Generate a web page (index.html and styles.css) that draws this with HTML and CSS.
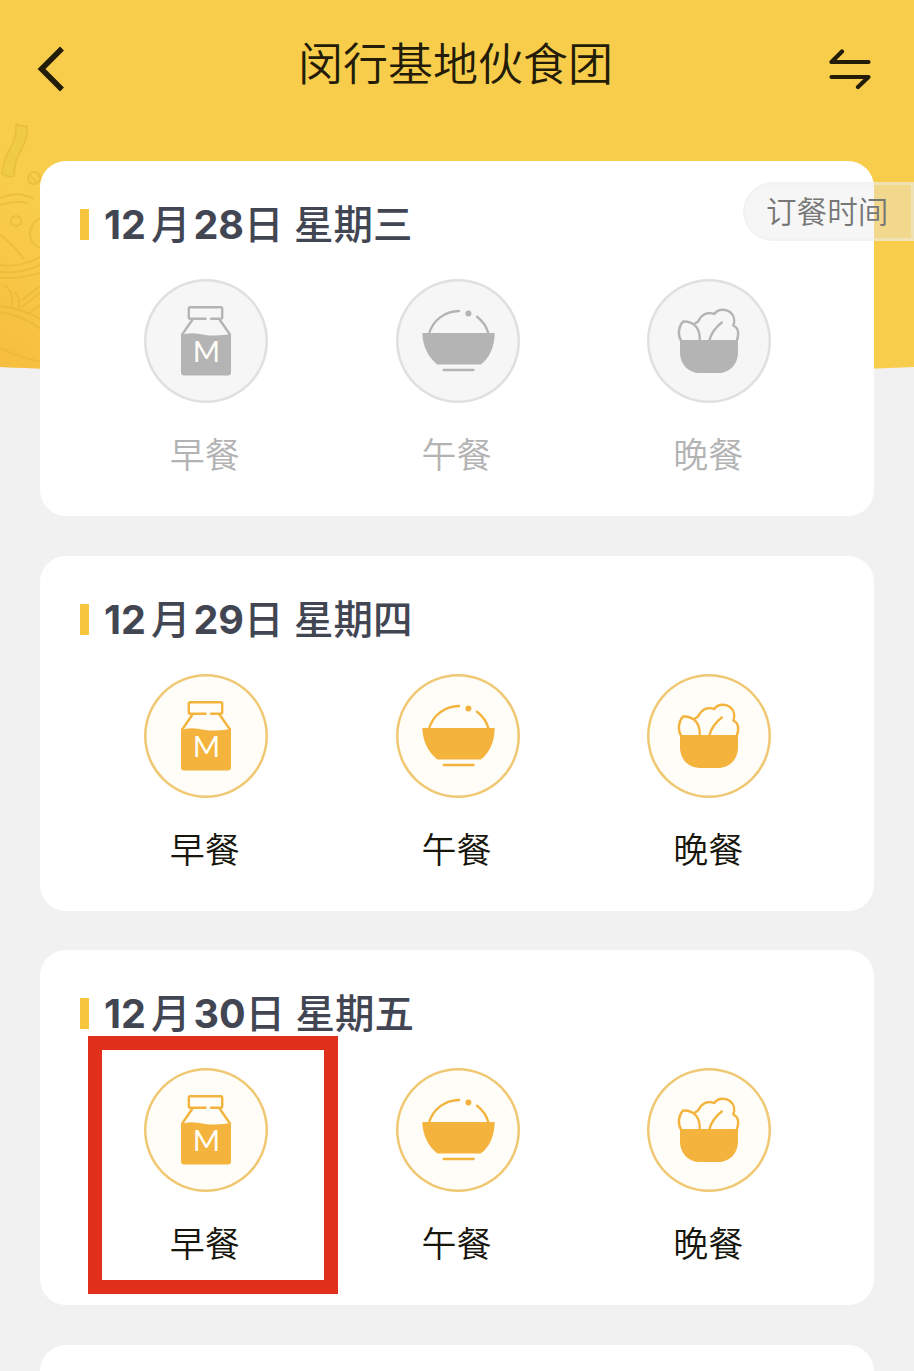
FILE: index.html
```html
<!DOCTYPE html>
<html lang="zh-CN">
<head>
  <meta charset="UTF-8">
  <title>闵行基地伙食团</title>
  <link rel="stylesheet" href="styles.css">
</head>
<body>

<!-- shared icons -->
<svg class="sprite" width="0" height="0">
  <symbol id="milk" viewBox="0 0 124 124">
    <path class="line" d="M61.5 39.7H46.2q-1.4 0-1.4-1.4V29.6q0-1.4 1.4-1.4h30.6q1.4 0 1.4 1.4v8.7q0 1.4-1.4 1.4H67M48.5 40.5L38.2 55.5M75.5 40.5L86 55.5"/>
    <path class="solid" d="M37 56q6-2.2 14-1.6c9 1 12 2.3 20 2.2q9-.3 16-1.6v38.2q0 3.2-3.2 3.2H40.2q-3.2 0-3.2-3.2z"/>
  </symbol>
  <symbol id="bowl" viewBox="0 0 124 124">
    <path class="line" d="M33 55A31 31 0 0 1 63 32M81 37.8A31 31 0 0 1 92.6 55M47.8 91H77.5"/>
    <circle class="solid" cx="72.4" cy="34.5" r="3"/>
    <path class="solid" d="M26.3 54H98.7C98.5 68 93.5 79 84.7 85.6H41.3C32 78 26.6 67 26.3 54z"/>
  </symbol>
  <symbol id="salad" viewBox="0 0 124 124">
    <path class="line" d="M34.3 62C30.5 56 31.2 48 36 42.5C47.5 42 53.5 50 52.7 62M48.5 44C52 43.5 51.5 40.5 54.5 37.5C58 33.8 63.5 33.5 67.3 35C70.5 30 78.5 29.5 83 33C87 36.2 88.3 41.5 86.3 46.5C91.5 49 92.3 54.5 89.7 62M62.3 61.5C64.3 54 69.5 47.5 74.8 43.5"/>
    <path class="solid" d="M33 61H91V73C91 86 82 94 71 94H53C42 94 33 86 33 73z"/>
  </symbol>
</svg>

<div class="page">
  <svg class="backdrop" viewBox="0 0 914 390">
    <defs>
      <linearGradient id="warm" x1="0.5" y1="0" x2="0.3" y2="1">
        <stop offset="0.3" stop-color="#f6b93a" stop-opacity="0"/>
        <stop offset="1" stop-color="#f6b93a" stop-opacity="0.75"/>
      </linearGradient>
    </defs>
    <path fill="#f9cd4c" d="M0 0H914V367Q457 387 0 367z"/>
    <path fill="url(#warm)" d="M0 130H60V369.5L0 367z"/>
    <!-- noodle pattern -->
    <g class="noodle">
      <path class="ribbon" d="M16 124q6 3 11 2q1 12-6 24t-7 26q-5 2-12-2q1-13 8-25t6-25z"/>
      <path d="M0 198q17-8 34 1M0 205q14-5 28-2M0 235q12 8 24 24M0 265q22 3 42-9M0 272q22 2 42-8M0 278q22 1 42-6M40 218q-10 6-10 16t10 14M0 312q24 4 42 18M0 306q24 3 42 14M4 285q12 8 7 22M14 292q8 5 4 18M22 300l18-14M22 307l18-14M28 314l14-11M0 348q20 10 42 14"/>
      <circle cx="16" cy="221" r="5"/>
      <circle cx="34" cy="178" r="6"/>
      <path d="M30 175l7 8M37 173l3 5"/>
    </g>
  </svg>

  <header class="topbar">
    <svg class="back" viewBox="0 0 30 46"><path d="M26 2.5L5.5 23L26 43.5"/></svg>
    <h1>闵行基地伙食团</h1>
    <svg class="swap" viewBox="0 0 42 42"><path d="M13 3.5L2.5 14H39.5M2.5 29H39.5L29 39"/></svg>
  </header>

  <div class="order-time">订餐时间</div>

  <main class="days">
    <section class="card disabled">
      <h2><b class="month">12</b>月<b class="date">28</b>日 星期三</h2>
      <div class="meals">
        <div class="meal"><svg class="icon" viewBox="0 0 124 124"><use href="#milk"/><text x="62.5" y="82.5">M</text></svg><span>早餐</span></div>
        <div class="meal"><svg class="icon"><use href="#bowl"/></svg><span>午餐</span></div>
        <div class="meal"><svg class="icon"><use href="#salad"/></svg><span>晚餐</span></div>
      </div>
    </section>

    <section class="card">
      <h2><b class="month">12</b>月<b class="date">29</b>日 星期四</h2>
      <div class="meals">
        <div class="meal"><svg class="icon" viewBox="0 0 124 124"><use href="#milk"/><text x="62.5" y="82.5">M</text></svg><span>早餐</span></div>
        <div class="meal"><svg class="icon"><use href="#bowl"/></svg><span>午餐</span></div>
        <div class="meal"><svg class="icon"><use href="#salad"/></svg><span>晚餐</span></div>
      </div>
    </section>

    <section class="card">
      <h2><b class="month">12</b>月<b class="date">30</b>日 星期五</h2>
      <div class="meals">
        <div class="meal marked"><svg class="icon" viewBox="0 0 124 124"><use href="#milk"/><text x="62.5" y="82.5">M</text></svg><span>早餐</span></div>
        <div class="meal"><svg class="icon"><use href="#bowl"/></svg><span>午餐</span></div>
        <div class="meal"><svg class="icon"><use href="#salad"/></svg><span>晚餐</span></div>
      </div>
    </section>

    <section class="card"></section>
  </main>
</div>

</body>
</html>
```
FILE: styles.css
```css
*,
*::before,
*::after {
  box-sizing: border-box;
}

body {
  margin: 0;
  background-color: #f1f1f1;
  font-family: Inter, "Noto Sans CJK SC", sans-serif;
}

.page {
  position: relative;
  height: 1371px;
  overflow: hidden;
}

.sprite {
  position: absolute;
}

.backdrop {
  position: absolute;
  top: 0;
  left: 0;
  width: 914px;
  height: 390px;
}

.noodle {
  fill: none;
  stroke: #dfb52f;
  stroke-width: 1.8;
  opacity: 0.5;
}

.noodle .ribbon {
  fill: #e8cc40;
}

.topbar {
  position: relative;
  height: 161px;
  padding: 30px 43px 0 36px;
  display: flex;
  align-items: flex-start;
  justify-content: space-between;
}

.topbar h1 {
  margin: 0;
  font-size: 45px;
  font-weight: 350;
  line-height: 70px;
  color: #231c08;
}

.topbar svg {
  fill: none;
  stroke: #231c08;
}

.back {
  width: 30px;
  height: 46px;
  margin: 16px 16px 0 0;
  stroke-width: 5.5;
}

.swap {
  width: 42px;
  height: 42px;
  margin-top: 18px;
  stroke-width: 4.2;
  stroke-linecap: round;
  stroke-linejoin: round;
}

.order-time {
  position: absolute;
  top: 182px;
  right: 0;
  z-index: 2;
  width: 171px;
  height: 59px;
  padding-left: 20px;
  border: 3px solid rgba(236, 236, 236, 0.65);
  border-radius: 30px 0 0 30px;
  background-color: rgba(233, 233, 233, 0.41);
  background-clip: padding-box;
  color: #777;
  font-size: 30.6px;
  font-weight: 350;
  line-height: 53px;
  white-space: nowrap;
}

.days {
  position: relative;
  display: flex;
  flex-direction: column;
  gap: 39.5px;
}

.card {
  flex: none;
  height: 355px;
  margin: 0 40px;
  padding: 34px 40px 0;
  border-radius: 26px;
  background-color: #fff;
}

.card h2 {
  position: relative;
  margin: 0;
  padding-left: 24px;
  font-size: 39.5px;
  font-weight: 500;
  line-height: 61px;
  color: #424653;
  white-space: nowrap;
}

.card h2::before {
  content: "";
  position: absolute;
  top: 14px;
  left: 0;
  width: 9px;
  height: 31px;
  background-color: #f7c53e;
}

.card h2 b {
  font-weight: 650;
}

.month {
  margin-right: 5px;
}

.date {
  margin-left: 3px;
}

.meals {
  display: flex;
  margin-top: 23px;
  margin-right: -1px;
}

.meal {
  position: relative;
  flex: 1;
  display: flex;
  flex-direction: column;
  align-items: center;
  gap: 27px;
  color: #17160c;
  font-size: 35px;
  font-weight: 350;
  line-height: 50px;
}

.meal span {
  margin-right: 2px;
}

.icon {
  width: 124px;
  height: 124px;
  border-radius: 50%;
  background-color: #fffdf7;
  box-shadow: inset 0 0 0 2.5px #f0c873;
  color: #f4b33c;
}

.icon text {
  fill: #fffdf7;
  font-family: Lato, sans-serif;
  font-size: 29.5px;
  font-weight: 400;
  text-anchor: middle;
}

.line {
  fill: none;
  stroke: currentColor;
  stroke-width: 2.4;
  stroke-linecap: round;
  stroke-linejoin: round;
}

.solid {
  fill: currentColor;
}

.disabled .meal {
  color: #b3b3b3;
}

.disabled .icon {
  background-color: #f6f6f6;
  box-shadow: inset 0 0 0 2.5px #e0e0e0;
  color: #b4b4b4;
}

/* red frame round the chosen meal */
.marked::after {
  content: "";
  position: absolute;
  top: -32px;
  left: 8px;
  width: 250px;
  height: 258px;
  border: 14px solid #e0301b;
}
```
